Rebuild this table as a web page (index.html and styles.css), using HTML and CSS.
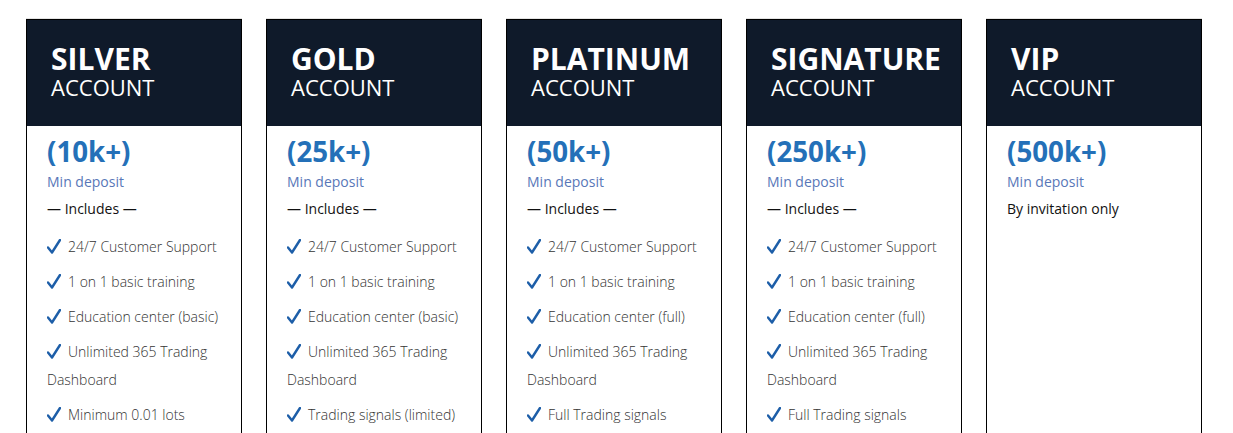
FILE: index.html
```html
<!DOCTYPE html>
<html>
<head>
<meta charset="utf-8">
<link rel="stylesheet" href="styles.css">
</head>
<body>
<div class="plans">
  <div class="card">
    <div class="head"><div class="tier">SILVER</div><div class="acct">ACCOUNT</div></div>
    <div class="body">
      <div class="amount">(10k+)</div>
      <div class="min">Min deposit</div>
      <div class="inc">— Includes —</div>
      <ul class="feats">
        <li><svg class="chk" viewBox="0 0 14 15"><path d="M1 8.5 L5 13.5 L13 1"/></svg>24/7 Customer Support</li>
        <li><svg class="chk" viewBox="0 0 14 15"><path d="M1 8.5 L5 13.5 L13 1"/></svg>1 on 1 basic training</li>
        <li><svg class="chk" viewBox="0 0 14 15"><path d="M1 8.5 L5 13.5 L13 1"/></svg>Education center (basic)</li>
        <li><svg class="chk" viewBox="0 0 14 15"><path d="M1 8.5 L5 13.5 L13 1"/></svg>Unlimited 365 Trading Dashboard</li>
        <li><svg class="chk" viewBox="0 0 14 15"><path d="M1 8.5 L5 13.5 L13 1"/></svg>Minimum 0.01 lots</li>
      </ul>
    </div>
  </div>
  <div class="card">
    <div class="head"><div class="tier">GOLD</div><div class="acct">ACCOUNT</div></div>
    <div class="body">
      <div class="amount">(25k+)</div>
      <div class="min">Min deposit</div>
      <div class="inc">— Includes —</div>
      <ul class="feats">
        <li><svg class="chk" viewBox="0 0 14 15"><path d="M1 8.5 L5 13.5 L13 1"/></svg>24/7 Customer Support</li>
        <li><svg class="chk" viewBox="0 0 14 15"><path d="M1 8.5 L5 13.5 L13 1"/></svg>1 on 1 basic training</li>
        <li><svg class="chk" viewBox="0 0 14 15"><path d="M1 8.5 L5 13.5 L13 1"/></svg>Education center (basic)</li>
        <li><svg class="chk" viewBox="0 0 14 15"><path d="M1 8.5 L5 13.5 L13 1"/></svg>Unlimited 365 Trading Dashboard</li>
        <li><svg class="chk" viewBox="0 0 14 15"><path d="M1 8.5 L5 13.5 L13 1"/></svg>Trading signals (limited)</li>
      </ul>
    </div>
  </div>
  <div class="card">
    <div class="head"><div class="tier">PLATINUM</div><div class="acct">ACCOUNT</div></div>
    <div class="body">
      <div class="amount">(50k+)</div>
      <div class="min">Min deposit</div>
      <div class="inc">— Includes —</div>
      <ul class="feats">
        <li><svg class="chk" viewBox="0 0 14 15"><path d="M1 8.5 L5 13.5 L13 1"/></svg>24/7 Customer Support</li>
        <li><svg class="chk" viewBox="0 0 14 15"><path d="M1 8.5 L5 13.5 L13 1"/></svg>1 on 1 basic training</li>
        <li><svg class="chk" viewBox="0 0 14 15"><path d="M1 8.5 L5 13.5 L13 1"/></svg>Education center (full)</li>
        <li><svg class="chk" viewBox="0 0 14 15"><path d="M1 8.5 L5 13.5 L13 1"/></svg>Unlimited 365 Trading Dashboard</li>
        <li><svg class="chk" viewBox="0 0 14 15"><path d="M1 8.5 L5 13.5 L13 1"/></svg>Full Trading signals</li>
      </ul>
    </div>
  </div>
  <div class="card">
    <div class="head"><div class="tier">SIGNATURE</div><div class="acct">ACCOUNT</div></div>
    <div class="body">
      <div class="amount">(250k+)</div>
      <div class="min">Min deposit</div>
      <div class="inc">— Includes —</div>
      <ul class="feats">
        <li><svg class="chk" viewBox="0 0 14 15"><path d="M1 8.5 L5 13.5 L13 1"/></svg>24/7 Customer Support</li>
        <li><svg class="chk" viewBox="0 0 14 15"><path d="M1 8.5 L5 13.5 L13 1"/></svg>1 on 1 basic training</li>
        <li><svg class="chk" viewBox="0 0 14 15"><path d="M1 8.5 L5 13.5 L13 1"/></svg>Education center (full)</li>
        <li><svg class="chk" viewBox="0 0 14 15"><path d="M1 8.5 L5 13.5 L13 1"/></svg>Unlimited 365 Trading Dashboard</li>
        <li><svg class="chk" viewBox="0 0 14 15"><path d="M1 8.5 L5 13.5 L13 1"/></svg>Full Trading signals</li>
      </ul>
    </div>
  </div>
  <div class="card">
    <div class="head"><div class="tier">VIP</div><div class="acct">ACCOUNT</div></div>
    <div class="body">
      <div class="amount">(500k+)</div>
      <div class="min">Min deposit</div>
      <div class="invite">By invitation only</div>
    </div>
  </div>
</div>
</body>
</html>
```

FILE: styles.css
```css
html, body {
  margin: 0;
  padding: 0;
  background: #fff;
  overflow: hidden;
}
body {
  font-family: "Open Sans", "Noto Sans", sans-serif;
  color: #222;
}
.plans {
  display: flex;
  gap: 24px;
  padding: 19px 0 0 26px;
  height: 414px;
}
.card {
  width: 216px;
  box-sizing: border-box;
  border: 1px solid #000;
  border-bottom: none;
  box-shadow: 0 -1px 0 #e4e4e4;
  flex: none;
  height: 600px;
}
.head {
  background: #0f1a2a;
  height: 106px;
  box-sizing: border-box;
  padding: 24px 0 0 24px;
  color: #fff;
}
.tier {
  font-size: 30px;
  font-weight: 700;
  line-height: 30px;
}
.acct {
  font-size: 22px;
  font-weight: 400;
  line-height: 26px;
}
.body {
  padding: 8px 20px 0 20px;
}
.amount {
  font-size: 27.7px;
  font-weight: 700;
  color: #2470b8;
  line-height: 34px;
}
.min {
  font-size: 14px;
  color: #5877b8;
  line-height: 22px;
  margin-top: 3px;
}
.inc, .invite {
  font-size: 14px;
  font-weight: 500;
  color: #111;
  line-height: 22px;
  margin-top: 5px;
}
.feats {
  list-style: none;
  margin: 13px 0 0 0;
  padding: 0;
}
.feats li {
  font-size: 14px;
  font-weight: 300;
  color: #333;
  line-height: 28px;
  margin-bottom: 7px;
}
.chk {
  width: 14px;
  height: 15px;
  margin-right: 7px;
  vertical-align: -2px;
}
.chk path {
  fill: none;
  stroke: #1d5ea8;
  stroke-width: 2.4;
  stroke-linecap: round;
  stroke-linejoin: round;
}
```
